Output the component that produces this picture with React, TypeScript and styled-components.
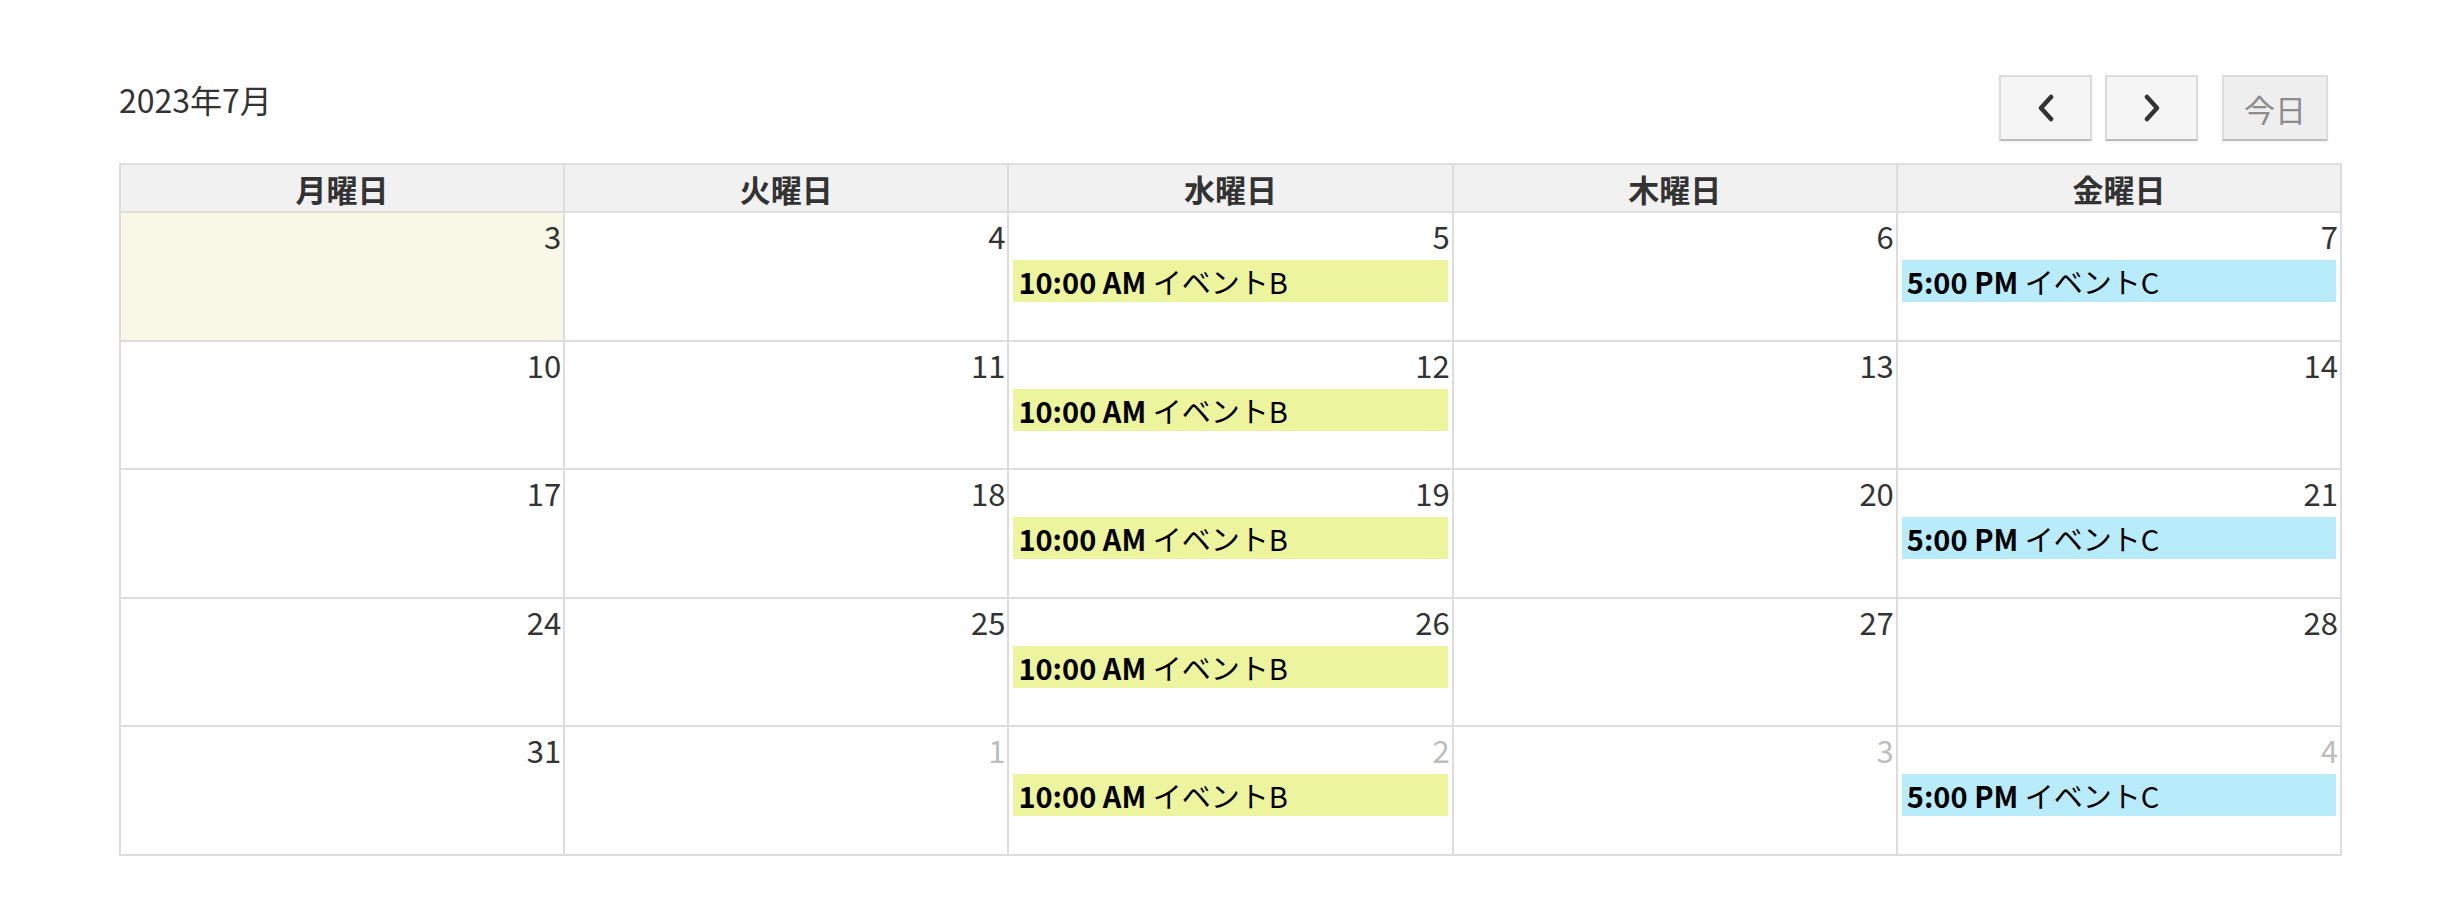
import React from "react";
import styled, { createGlobalStyle } from "styled-components";

const GlobalStyle = createGlobalStyle`
  body {
    margin: 0;
    background: #fff;
    font-family: "Noto Sans CJK JP", "Noto Sans", sans-serif;
    color: #333;
  }
`;

type CalEvent = { time: string; title: string; kind: "b" | "c" };
type Day = { day: number; other?: boolean; today?: boolean; event?: CalEvent };

const WEEKDAYS = ["月曜日", "火曜日", "水曜日", "木曜日", "金曜日"];

const EVENT_B: CalEvent = { time: "10:00 AM", title: "イベントB", kind: "b" };
const EVENT_C: CalEvent = { time: "5:00 PM", title: "イベントC", kind: "c" };

const WEEKS: Day[][] = [
  [
    { day: 3, today: true },
    { day: 4 },
    { day: 5, event: EVENT_B },
    { day: 6 },
    { day: 7, event: EVENT_C },
  ],
  [{ day: 10 }, { day: 11 }, { day: 12, event: EVENT_B }, { day: 13 }, { day: 14 }],
  [{ day: 17 }, { day: 18 }, { day: 19, event: EVENT_B }, { day: 20 }, { day: 21, event: EVENT_C }],
  [{ day: 24 }, { day: 25 }, { day: 26, event: EVENT_B }, { day: 27 }, { day: 28 }],
  [
    { day: 31 },
    { day: 1, other: true },
    { day: 2, other: true, event: EVENT_B },
    { day: 3, other: true },
    { day: 4, other: true, event: EVENT_C },
  ],
];

const Page = styled.div`
  padding: 71px 0 0 119px;
  width: 2223px;
`;

const Toolbar = styled.div`
  display: flex;
  justify-content: space-between;
  align-items: flex-start;
  height: 70px;
  padding-right: 14px;
  margin-bottom: 22px;
`;

const Title = styled.h2`
  margin: 5px 0 0;
  font-size: 32px;
  font-weight: 400;
  line-height: normal;
  color: #333;
`;

const ButtonRow = styled.div`
  display: flex;
  margin-top: 4px;
`;

const NavButton = styled.button<{ $disabled?: boolean; $gap?: number }>`
  box-sizing: border-box;
  height: 66px;
  width: ${(p) => (p.$disabled ? 106 : 93)}px;
  margin-left: ${(p) => p.$gap ?? 0}px;
  display: flex;
  align-items: center;
  justify-content: center;
  padding: 0;
  border: 2px solid #dcdcdc;
  border-bottom-color: #bdbdbd;
  background: ${(p) => (p.$disabled ? "#eeeeee" : "#f5f5f5")};
  box-shadow: 0 2px 3px rgba(0, 0, 0, 0.05);
  font-family: "Noto Sans CJK JP", sans-serif;
  font-size: 31px;
  color: ${(p) => (p.$disabled ? "#8c8c8c" : "#333")};
`;

const Grid = styled.div`
  display: grid;
  grid-template-columns: repeat(5, 1fr);
  border-top: 2px solid #ddd;
  border-left: 2px solid #ddd;
`;

const HeadCell = styled.div`
  box-sizing: border-box;
  height: 48px;
  display: flex;
  align-items: center;
  justify-content: center;
  background: #f1f1f1;
  border-right: 2px solid #ddd;
  border-bottom: 2px solid #ddd;
  font-size: 31px;
  font-weight: 700;
  color: #333;
`;

const DayCell = styled.div<{ $today?: boolean }>`
  box-sizing: border-box;
  height: 128.5px;
  display: flex;
  flex-direction: column;
  background: ${(p) => (p.$today ? "#f9f7e5" : "#fff")};
  border-right: 2px solid #ddd;
  border-bottom: 2px solid #ddd;
`;

const DayNumber = styled.div<{ $other?: boolean }>`
  text-align: right;
  padding-right: 2px;
  font-size: 31px;
  line-height: normal;
  color: ${(p) => (p.$other ? "#bdbdbd" : "#333")};
`;

const EventBar = styled.div<{ $kind: "b" | "c" }>`
  margin: 2px 4px 0;
  padding: 0 4px;
  border: 1px solid ${(p) => (p.$kind === "b" ? "#ecf49e" : "#b8ecfa")};
  background: ${(p) => (p.$kind === "b" ? "#ecf49e" : "#b8ecfa")};
  font-size: 29px;
  line-height: 40px;
  color: #000;
  white-space: nowrap;
  overflow: hidden;
`;

const EventTime = styled.span`
  font-weight: 700;
`;

const Chevron = ({ dir }: { dir: "left" | "right" }) => (
  <svg width="20" height="28" viewBox="0 0 20 28">
    <polyline
      points={dir === "left" ? "15,3 5,14 15,25" : "5,3 15,14 5,25"}
      fill="none"
      stroke="#333"
      strokeWidth="4.5"
      strokeLinecap="round"
      strokeLinejoin="round"
    />
  </svg>
);

export default function App(): React.ReactElement {
  return (
    <>
      <GlobalStyle />
      <Page>
        <Toolbar>
          <Title>2023年7月</Title>
          <ButtonRow>
            <NavButton>
              <Chevron dir="left" />
            </NavButton>
            <NavButton $gap={13}>
              <Chevron dir="right" />
            </NavButton>
            <NavButton $gap={24} $disabled>
              今日
            </NavButton>
          </ButtonRow>
        </Toolbar>
        <Grid>
          {WEEKDAYS.map((w) => (
            <HeadCell key={w}>{w}</HeadCell>
          ))}
          {WEEKS.flat().map((d, i) => (
            <DayCell key={i} $today={d.today}>
              <DayNumber $other={d.other}>{d.day}</DayNumber>
              {d.event && (
                <EventBar $kind={d.event.kind}>
                  <EventTime>{d.event.time}</EventTime> {d.event.title}
                </EventBar>
              )}
            </DayCell>
          ))}
        </Grid>
      </Page>
    </>
  );
}
